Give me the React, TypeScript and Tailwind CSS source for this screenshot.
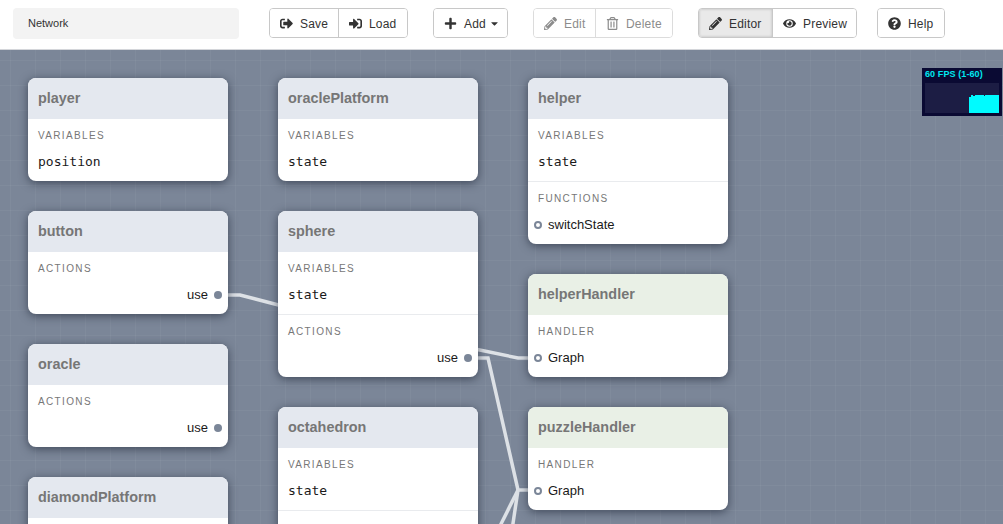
import React from "react";
import {
  FaCaretDown,
  FaEye,
  FaPencilAlt,
  FaPlus,
  FaQuestionCircle,
  FaRegTrashAlt,
  FaSignInAlt,
  FaSignOutAlt,
} from "react-icons/fa";

type Port = "in" | "out" | "none";
type Row = { name: string; port?: Port; mono?: boolean };
type Section = { label: string; rows: Row[] };
type Node = { title: string; handler?: boolean; sections: Section[] };

const variables = (name: string): Section => ({ label: "Variables", rows: [{ name, mono: true }] });
const actions: Section = { label: "Actions", rows: [{ name: "use", port: "out" }] };
const handler: Section = { label: "Handler", rows: [{ name: "Graph", port: "in" }] };
// the part of a card that runs past the bottom of the window
const cutOff: Section = { label: "", rows: [] };

const columns: Node[][] = [
  [
    { title: "player", sections: [variables("position")] },
    { title: "button", sections: [actions] },
    { title: "oracle", sections: [actions] },
    { title: "diamondPlatform", sections: [cutOff] },
  ],
  [
    { title: "oraclePlatform", sections: [variables("state")] },
    { title: "sphere", sections: [variables("state"), actions] },
    { title: "octahedron", sections: [variables("state"), cutOff] },
  ],
  [
    {
      title: "helper",
      sections: [variables("state"), { label: "Functions", rows: [{ name: "switchState", port: "in" }] }],
    },
    { title: "helperHandler", handler: true, sections: [handler] },
    { title: "puzzleHandler", handler: true, sections: [handler] },
  ],
];

const ToolButton = ({
  icon,
  label,
  width,
  active,
  disabled,
  caret,
  first,
}: {
  icon: React.ReactNode;
  label: string;
  width: string;
  active?: boolean;
  disabled?: boolean;
  caret?: boolean;
  first?: boolean;
}) => (
  <button
    className={`flex h-full items-center gap-[7px] pt-[1px] pl-[10px] text-[12px] tracking-[0.2px] ${width} ${
      first ? "" : "border-l"
    } ${disabled ? "border-[#dcdcdc] text-[#8c8c8c]" : "border-[#c8c8c8] text-[#333]"} ${
      active ? "bg-[#e9e9e9] shadow-[inset_0_0_3px_rgba(0,0,0,0.2)]" : "bg-white"
    }`}
  >
    <span className="flex w-[13px] justify-center text-[13px]">{icon}</span>
    <span>{label}</span>
    {caret && <FaCaretDown className="-ml-[4px] text-[11px]" />}
  </button>
);

const Group = ({ children, disabled, className }: { children: React.ReactNode; disabled?: boolean; className: string }) => (
  <div
    className={`flex h-[30px] overflow-hidden rounded-[4px] border ${
      disabled ? "border-[#dcdcdc]" : "border-[#c8c8c8]"
    } ${className}`}
  >
    {children}
  </div>
);

const NodeCard = ({ node }: { node: Node }) => (
  <div className="w-[200px] shrink-0 overflow-hidden rounded-[8px] bg-white shadow-[0_2px_10px_rgba(30,38,55,0.65)]">
    <div
      className={`flex h-[41px] items-center px-[10px] text-[14.4px] font-bold text-[#767676] ${
        node.handler ? "bg-[#e9f0e6]" : "bg-[#e4e8ef]"
      }`}
    >
      {node.title}
    </div>
    {node.sections.map((section, i) => (
      <div key={i} className={`h-[62px] px-[10px] ${i > 0 ? "box-content border-t border-[#e9ebee]" : ""}`}>
        <div className="flex h-[32px] items-center text-[10px] tracking-[0.135em] text-[#777] uppercase">
          {section.label}
        </div>
        {section.rows.map((row) => (
          <div
            key={row.name}
            className={`relative mt-[1px] flex h-[20px] items-center text-[13px] text-[#1a1a1a] ${
              row.port === "out" ? "justify-end pr-[10px]" : ""
            } ${row.port === "in" ? "pl-[10px]" : ""} ${
              row.mono ? "font-['DejaVu_Sans_Mono',monospace] text-[#0f1a26]" : ""
            }`}
          >
            {row.name}
            {row.port === "out" && (
              <span className="absolute top-[6px] right-[-4px] h-[8px] w-[8px] rounded-full bg-[#7b8698]" />
            )}
            {row.port === "in" && (
              <span className="absolute top-[6px] left-[-4px] h-[8px] w-[8px] rounded-full border-2 border-[#7b8698] bg-white" />
            )}
          </div>
        ))}
      </div>
    ))}
  </div>
);

const FpsPanel = () => (
  <div className="absolute top-[18px] right-[1px] h-[48px] w-[80px] bg-[#0a0a33] font-['Liberation_Sans',sans-serif] text-[9px] leading-[13px] font-bold tracking-[0.1px] text-[#00e8f0]">
    <div className="pl-[3px]">60 FPS (1-60)</div>
    <div className="mx-[3px] mt-[2px] flex h-[30px] items-end justify-end bg-[#1c1d44]">
      <div className="relative h-[18px] w-[30px] bg-[#00fbff]">
        <span className="absolute top-0 left-0 h-[2px] w-[2px] bg-[#1c1d44]" />
        <span className="absolute top-0 left-[4px] h-[1px] w-[2px] bg-[#1c1d44]" />
        <span className="absolute top-0 left-[15px] h-[1px] w-[1px] bg-[#1c1d44]" />
      </div>
    </div>
  </div>
);

export default function App() {
  return (
    <div className="flex h-[524px] w-[1003px] flex-col overflow-hidden bg-white font-['Liberation_Sans',sans-serif]">
      <header className="flex h-[50px] shrink-0 items-start border-b border-[#d4d6da] pt-[8px] pl-[13px]">
        <div className="flex h-[31px] w-[226px] items-center rounded-[4px] bg-[#f3f3f3] pl-[15px] text-[11px] text-[#333]">
          Network
        </div>
        <Group className="ml-[30px]">
          <ToolButton first width="w-[68px]" icon={<FaSignOutAlt />} label="Save" />
          <ToolButton width="w-[69px]" icon={<FaSignInAlt />} label="Load" />
        </Group>
        <Group className="ml-[25px]">
          <ToolButton first caret width="w-[73px]" icon={<FaPlus />} label="Add" />
        </Group>
        <Group disabled className="ml-[25px]">
          <ToolButton first disabled width="w-[61px]" icon={<FaPencilAlt />} label="Edit" />
          <ToolButton disabled width="w-[77px]" icon={<FaRegTrashAlt />} label="Delete" />
        </Group>
        <Group className="ml-[25px]">
          <ToolButton first active width="w-[73px]" icon={<FaPencilAlt />} label="Editor" />
          <ToolButton width="w-[84px]" icon={<FaEye />} label="Preview" />
        </Group>
        <Group className="ml-[20px]">
          <ToolButton first width="w-[66px]" icon={<FaQuestionCircle />} label="Help" />
        </Group>
      </header>

      <main className="relative flex-1 overflow-hidden bg-[#7b8698] bg-[linear-gradient(rgba(255,255,255,0.04)_1px,transparent_1px),linear-gradient(90deg,rgba(255,255,255,0.04)_1px,transparent_1px)] bg-[size:25px_25px] bg-[position:10px_10px]">
        <svg className="absolute inset-0 h-full w-full" fill="none" stroke="#dde1e6" strokeWidth="3.5">
          <path d="M228 245H240L290 258" />
          <path d="M470 298L518 308H530" />
          <path d="M470 308H488L518 440H530" />
          <path d="M518 440L498 480" />
          <path d="M518 440L512 480" />
        </svg>
        <div className="relative flex gap-[50px] pt-[28px] pl-[28px]">
          {columns.map((column, i) => (
            <div key={i} className="flex w-[200px] flex-col gap-[30px]">
              {column.map((node) => (
                <NodeCard key={node.title} node={node} />
              ))}
            </div>
          ))}
        </div>
        <FpsPanel />
      </main>
    </div>
  );
}
